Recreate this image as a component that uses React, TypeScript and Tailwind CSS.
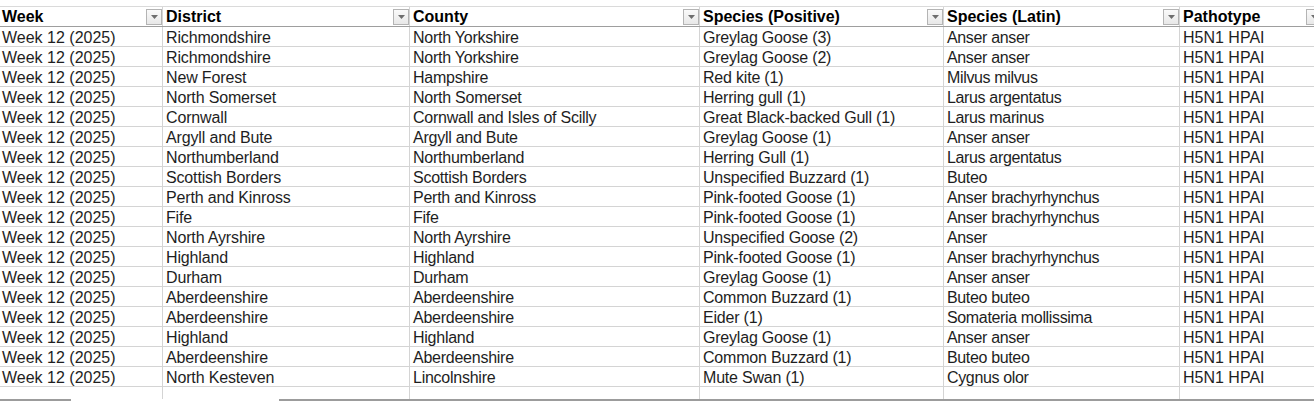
import React from "react";

const rows: string[][] = [
  ["Week 12 (2025)", "Richmondshire", "North Yorkshire", "Greylag Goose (3)", "Anser anser", "H5N1 HPAI"],
  ["Week 12 (2025)", "Richmondshire", "North Yorkshire", "Greylag Goose (2)", "Anser anser", "H5N1 HPAI"],
  ["Week 12 (2025)", "New Forest", "Hampshire", "Red kite (1)", "Milvus milvus", "H5N1 HPAI"],
  ["Week 12 (2025)", "North Somerset", "North Somerset", "Herring gull (1)", "Larus argentatus", "H5N1 HPAI"],
  ["Week 12 (2025)", "Cornwall", "Cornwall and Isles of Scilly", "Great Black-backed Gull (1)", "Larus marinus", "H5N1 HPAI"],
  ["Week 12 (2025)", "Argyll and Bute", "Argyll and Bute", "Greylag Goose (1)", "Anser anser", "H5N1 HPAI"],
  ["Week 12 (2025)", "Northumberland", "Northumberland", "Herring Gull (1)", "Larus argentatus", "H5N1 HPAI"],
  ["Week 12 (2025)", "Scottish Borders", "Scottish Borders", "Unspecified Buzzard (1)", "Buteo", "H5N1 HPAI"],
  ["Week 12 (2025)", "Perth and Kinross", "Perth and Kinross", "Pink-footed Goose (1)", "Anser brachyrhynchus", "H5N1 HPAI"],
  ["Week 12 (2025)", "Fife", "Fife", "Pink-footed Goose (1)", "Anser brachyrhynchus", "H5N1 HPAI"],
  ["Week 12 (2025)", "North Ayrshire", "North Ayrshire", "Unspecified Goose (2)", "Anser", "H5N1 HPAI"],
  ["Week 12 (2025)", "Highland", "Highland", "Pink-footed Goose (1)", "Anser brachyrhynchus", "H5N1 HPAI"],
  ["Week 12 (2025)", "Durham", "Durham", "Greylag Goose (1)", "Anser anser", "H5N1 HPAI"],
  ["Week 12 (2025)", "Aberdeenshire", "Aberdeenshire", "Common Buzzard (1)", "Buteo buteo", "H5N1 HPAI"],
  ["Week 12 (2025)", "Aberdeenshire", "Aberdeenshire", "Eider (1)", "Somateria mollissima", "H5N1 HPAI"],
  ["Week 12 (2025)", "Highland", "Highland", "Greylag Goose (1)", "Anser anser", "H5N1 HPAI"],
  ["Week 12 (2025)", "Aberdeenshire", "Aberdeenshire", "Common Buzzard (1)", "Buteo buteo", "H5N1 HPAI"],
  ["Week 12 (2025)", "North Kesteven", "Lincolnshire", "Mute Swan (1)", "Cygnus olor", "H5N1 HPAI"],
];

const headers = ["Week", "District", "County", "Species (Positive)", "Species (Latin)", "Pathotype"];
const widths = ["w-[163px]", "w-[247px]", "w-[290px]", "w-[244px]", "w-[236px]", "w-[143px]"];
const pads = ["pl-[2px]", "pl-[3px]", "pl-[3px]", "pl-[3px]", "pl-[3px]", "pl-[3px]"];
const tracks = ["tracking-normal", "tracking-[-0.15px]", "tracking-[-0.25px]", "tracking-[-0.2px]", "tracking-[-0.35px]", "tracking-normal"];

function FilterButton() {
  return (
    <div className="w-[16px] h-[16px] shrink-0 border border-[#b4b4b4] bg-gradient-to-b from-[#fafafa] to-[#e8e8e8] flex items-center justify-center">
      <svg width="7" height="4" viewBox="0 0 7 4">
        <polygon points="0,0 7,0 3.5,4" fill="#6e6e6e" />
      </svg>
    </div>
  );
}

export default function App() {
  return (
    <div
      className="w-[1314px] h-[401px] overflow-hidden bg-white text-[16px] leading-[19px] text-[#1e1e1e] relative"
      style={{ fontFamily: '"Liberation Sans", Arial, sans-serif' }}
    >
      <div className="pt-[6px]">
        <div className="flex border-t border-[#dadada] border-b border-b-[#9e9e9e] h-[21px]">
          {headers.map((h, i) => (
            <div
              key={h}
              className={`${widths[i]} shrink-0 flex items-center justify-between border-r border-[#d4d4d4] ${pads[i]} font-bold text-black`}
            >
              <span className="whitespace-nowrap">{h}</span>
              <FilterButton />
            </div>
          ))}
        </div>
        {rows.map((r, ri) => (
          <div key={ri} className="flex h-[20px] border-b border-[#d4d4d4]">
            {r.map((c, ci) => (
              <div
                key={ci}
                className={`${widths[ci]} shrink-0 border-r border-[#d4d4d4] ${pads[ci]} ${tracks[ci]} pt-[1px] flex items-center whitespace-nowrap`}
              >
                {c}
              </div>
            ))}
          </div>
        ))}
        <div className="flex h-[12px]">
          {widths.map((w, i) => (
            <div key={i} className={`${w} shrink-0 border-r border-[#d4d4d4]`} />
          ))}
        </div>
      </div>
      <div className="absolute left-0 bottom-0 w-full h-[2px] flex">
        <div className="w-[71px] bg-[#9c9c9c]" />
        <div className="w-[208px] bg-white" />
        <div className="flex-1 bg-[#9c9c9c]" />
      </div>
    </div>
  );
}
